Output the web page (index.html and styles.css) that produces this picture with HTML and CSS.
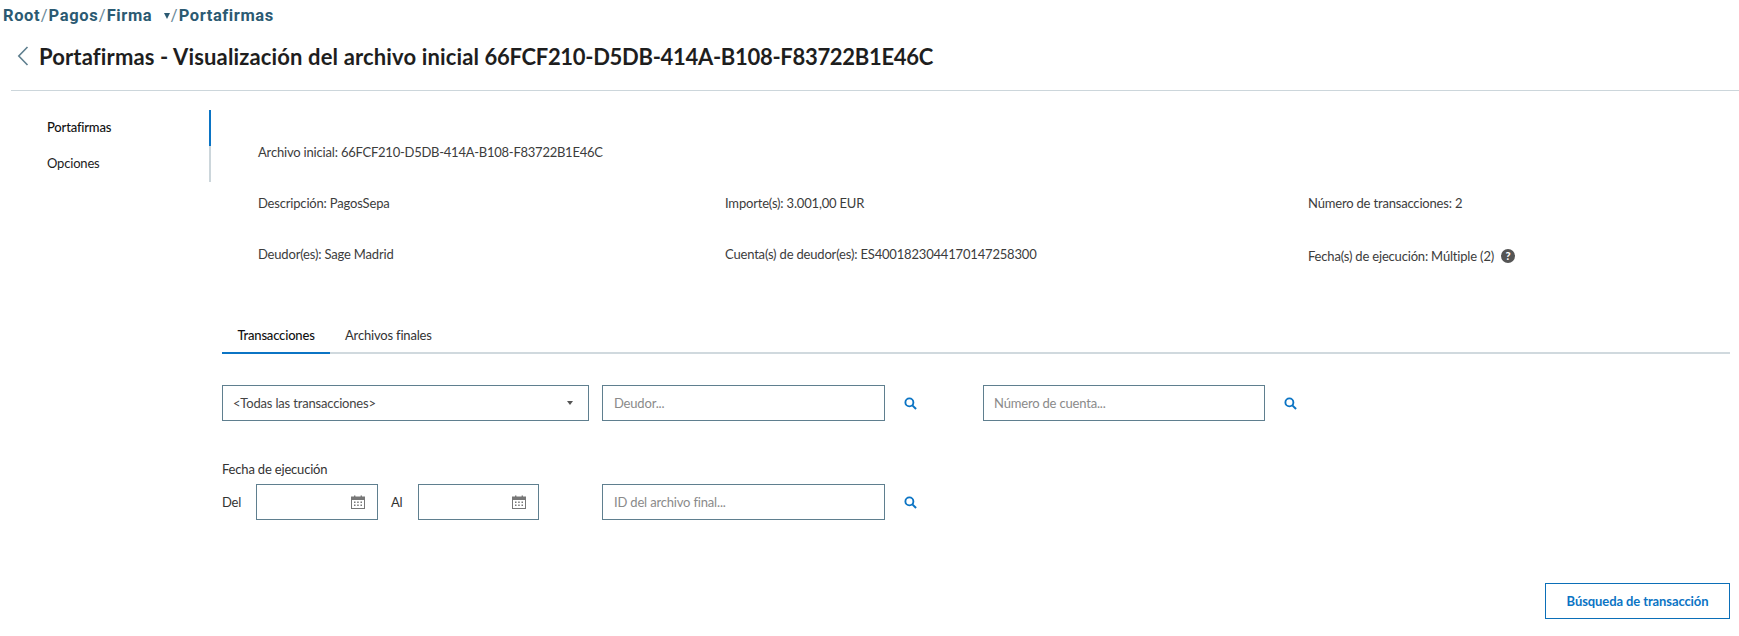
FILE: index.html
```html
<!DOCTYPE html>
<html lang="es">
<head>
<meta charset="utf-8">
<title>Portafirmas</title>
<link rel="stylesheet" href="styles.css">
</head>
<body>
<svg class="sprite" width="0" height="0" aria-hidden="true">
  <defs>
    <symbol id="search" viewBox="0 0 14 14">
      <circle cx="5.8" cy="5.8" r="4.3" fill="none" stroke="currentColor" stroke-width="2"/>
      <path d="M9 9l4 4" fill="none" stroke="currentColor" stroke-width="2.2"/>
    </symbol>
    <symbol id="calendar" viewBox="0 0 14 14">
      <path d="M0 1.5h14V14H0z" fill="#777"/>
      <path d="M1 5h12v8H1z" fill="#fff"/>
      <path d="M3 0.5h1.4v2.5H3zM9.6 0.5H11v2.5H9.6z" fill="#777"/>
      <path d="M3 6.5h1.5V8H3zM6.2 6.5h1.5V8H6.2zM9.5 6.5H11V8H9.5zM3 9.5h1.5V11H3zM6.2 9.5h1.5V11H6.2zM9.5 9.5H11V11H9.5z" fill="#777"/>
    </symbol>
  </defs>
</svg>
<nav class="crumbs">
  <a>Root</a><i>/</i><a>Pagos</a><i>/</i><a>Firma</a><span class="caret"></span><i>/</i><a>Portafirmas</a>
</nav>
<header class="head">
  <svg class="back" width="12" height="20" viewBox="0 0 12 20"><path d="M10.5 1L1.8 10l8.7 9" fill="none" stroke="#5f7f8f" stroke-width="1.6"/></svg>
  <h1>Portafirmas - Visualización del archivo inicial <span class="code">66FCF210-D5DB-414A-B108-F83722B1E46C</span></h1>
</header>
<div class="layout">
  <ul class="side">
    <li class="side-item active">Portafirmas</li>
    <li class="side-item">Opciones</li>
  </ul>
  <main class="content">
    <section class="info">
      <div class="info-first">Archivo inicial: <span class="code">66FCF210-D5DB-414A-B108-F83722B1E46C</span></div>
      <div class="info-cell">Descripción: PagosSepa</div>
      <div class="info-cell">Importe(s): 3.001,00 EUR</div>
      <div class="info-cell">Número de transacciones: 2</div>
      <div class="info-cell">Deudor(es): Sage Madrid</div>
      <div class="info-cell">Cuenta(s) de deudor(es): ES4001823044170147258300</div>
      <div class="info-cell info-low">Fecha(s) de ejecución: Múltiple (2)<span class="help">?</span></div>
    </section>
    <div class="tabs">
      <div class="tab current">Transacciones</div>
      <div class="tab">Archivos finales</div>
    </div>
    <section class="filters">
      <div class="box select"><span>&lt;Todas las transacciones&gt;</span><b class="arrow"></b></div>
      <div class="box text ph">Deudor...</div>
      <svg class="find"><use href="#search"/></svg>
      <div class="box text account ph">Número de cuenta...</div>
      <svg class="find"><use href="#search"/></svg>
    </section>
    <section class="filters second">
      <div class="dates">
        <div class="dates-label">Fecha de ejecución</div>
        <div class="dates-row">
          <span class="del">Del</span>
          <div class="box date one"><svg class="cal"><use href="#calendar"/></svg></div>
          <span class="al">Al</span>
          <div class="box date two"><svg class="cal"><use href="#calendar"/></svg></div>
        </div>
      </div>
      <div class="box text ph">ID del archivo final...</div>
      <svg class="find"><use href="#search"/></svg>
    </section>
    <div class="actions"><button class="primary">Búsqueda de transacción</button></div>
  </main>
</div>
</body>
</html>
```
FILE: styles.css
```css
* { box-sizing: border-box; }
html, body { margin: 0; padding: 0; background: #fff; }
body { font-family: Lato, "Open Sans", sans-serif; font-size: 13px; letter-spacing: -.18px; color: #333; height: 636px; overflow: hidden; }
.sprite { position: absolute; }
ul { list-style: none; margin: 0; padding: 0; }

.crumbs { display: flex; align-items: center; height: 31px; padding-left: 3px; font-family: Roboto, sans-serif; font-weight: 700; font-size: 16.5px; color: #2b5a72; letter-spacing: .6px; }
.crumbs i { font-style: normal; font-weight: 400; color: #6d8a99; margin: 0 .5px; }
.caret { width: 0; height: 0; margin-left: 12px; border-left: 3.5px solid transparent; border-right: 3.5px solid transparent; border-top: 6px solid #2b5a72; margin-right: 0; }

.head { display: flex; align-items: center; height: 60px; margin-left: 11px; padding: 0 0 9px 6px; border-bottom: 1px solid #ccd6db; }
.back { margin-right: 10px; flex: none; }
h1 { margin: 0; font-size: 22px; letter-spacing: .14px; font-weight: 700; color: #1e1e1e; white-space: nowrap; }
h1 .code { letter-spacing: -.3px; }
.info-first .code { letter-spacing: -.25px; }

.layout { display: flex; }
.side { width: 211px; flex: none; margin-top: 19px; align-self: flex-start; }
.side-item { height: 36px; line-height: 34px; padding-left: 47px; border-right: 2px solid #ccd6db; color: #222; }
.side-item.active { border-right-color: #0b74c4; font-weight: 500; color: #111; }

.content { flex: none; width: 1508px; margin-left: 11px; }

.info { display: grid; grid-template-columns: 467px 583px 1fr; grid-auto-rows: 51px; margin-top: 35px; padding-left: 36px; align-items: center; color: #3c3c3c; }
.info-first { grid-column: 1 / -1; }
.info-low { padding-top: 5px; display: flex; align-items: center; }
.help { display: inline-block; width: 14px; height: 14px; line-height: 14px; margin-left: 7px; border-radius: 50%; background: #555; color: #fff; font-size: 11px; font-weight: 900; text-align: center; }

.tabs { display: flex; margin-top: 37px; border-bottom: 2px solid #d0d9de; height: 38px; }
.tab { padding: 0 15px; line-height: 39px; color: #333; height: 38px; }
.tab.current { width: 108px; text-align: center; font-weight: 500; color: #111; border-bottom: 2px solid #0b74c4; padding: 0; }

.filters { display: flex; align-items: center; margin-top: 31px; }
.box { height: 36px; border: 1px solid #5f7f8f; display: flex; align-items: center; }
.select { width: 367px; margin-right: 13px; padding: 0 10px; justify-content: space-between; color: #444; }
.arrow { width: 0; height: 0; margin-right: 5px; border-left: 3.5px solid transparent; border-right: 3.5px solid transparent; border-top: 4px solid #555; }
.text { width: 283px; padding-left: 11px; }
.account { width: 282px; padding-left: 10px; }
.ph { color: #8a8a8a; }
.find { width: 13px; height: 13px; margin-left: 19px; margin-right: 66px; color: #0b74c4; flex: none; }

.second { align-items: flex-end; margin-top: 37px; }
.second .find { align-self: flex-end; margin-bottom: 11px; }
.dates { width: 380px; }
.dates-label { height: 26px; line-height: 22px; color: #333; }
.dates-row { display: flex; align-items: center; }
.del { width: 34px; }
.al { width: 27px; margin-left: 13px; }
.date { justify-content: flex-end; padding-right: 12px; }
.one { width: 122px; }
.two { width: 121px; }
.cal { width: 14px; height: 14px; }

.actions { display: flex; justify-content: flex-end; margin-top: 63px; }
.primary { width: 185px; height: 36px; background: #fff; border: 1px solid #0b6fb8; color: #0b74c4; font: 700 13px Lato, sans-serif; letter-spacing: -.1px; }
```
